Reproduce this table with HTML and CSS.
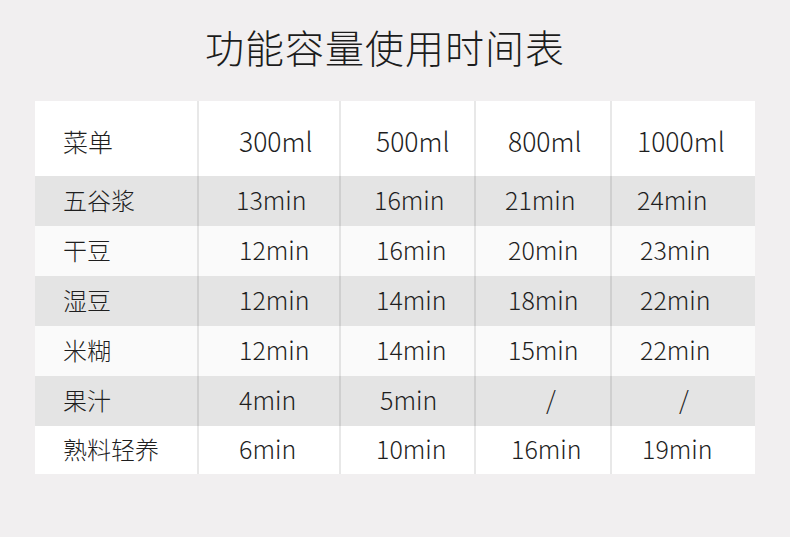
FILE: index.html
```html
<!DOCTYPE html>
<html lang="zh-CN">
<head>
<meta charset="utf-8">
<title>功能容量使用时间表</title>
<link rel="stylesheet" href="styles.css">
</head>
<body>
<main class="page">
  <h1 class="title">功能容量使用时间表</h1>
  <div class="table">
    <div class="row head">
      <div class="cell c1">菜单</div>
      <div class="cell c2">300ml</div>
      <div class="cell c3">500ml</div>
      <div class="cell c4">800ml</div>
      <div class="cell c5">1000ml</div>
    </div>
    <div class="row gray">
      <div class="cell c1">五谷浆</div>
      <div class="cell c2 l">13min</div>
      <div class="cell c3 l">16min</div>
      <div class="cell c4 l">21min</div>
      <div class="cell c5">24min</div>
    </div>
    <div class="row light">
      <div class="cell c1">干豆</div>
      <div class="cell c2">12min</div>
      <div class="cell c3">16min</div>
      <div class="cell c4">20min</div>
      <div class="cell c5 r">23min</div>
    </div>
    <div class="row gray">
      <div class="cell c1">湿豆</div>
      <div class="cell c2">12min</div>
      <div class="cell c3">14min</div>
      <div class="cell c4">18min</div>
      <div class="cell c5 r">22min</div>
    </div>
    <div class="row light">
      <div class="cell c1">米糊</div>
      <div class="cell c2">12min</div>
      <div class="cell c3">14min</div>
      <div class="cell c4">15min</div>
      <div class="cell c5 r">22min</div>
    </div>
    <div class="row gray">
      <div class="cell c1">果汁</div>
      <div class="cell c2">4min</div>
      <div class="cell c3 r">5min</div>
      <div class="cell c4 slash">/</div>
      <div class="cell c5 slash">/</div>
    </div>
    <div class="row white last">
      <div class="cell c1">熟料轻养</div>
      <div class="cell c2">6min</div>
      <div class="cell c3">10min</div>
      <div class="cell c4 r">16min</div>
      <div class="cell c5 rr">19min</div>
    </div>
  </div>
</main>
</body>
</html>
```

FILE: styles.css
```css
html, body {
  margin: 0;
  padding: 0;
}
body {
  background: #f1eff0;
  font-family: "Noto Sans CJK SC", "Noto Sans", sans-serif;
  font-weight: 300;
  color: #1e1e1e;
  width: 790px;
  height: 537px;
  overflow: hidden;
}
.page {
  display: flex;
  flex-direction: column;
  align-items: center;
}
.title {
  margin: 21px 20px 0 0;
  height: 80px;
  font-size: 39px;
  font-weight: 300;
  line-height: 50px;
  letter-spacing: 1px;
  color: #1c1c1c;
}
.table {
  width: 720px;
  display: flex;
  flex-direction: column;
}
.row {
  display: grid;
  grid-template-columns: 162px 142px 135px 136px 145px;
  height: 50px;
}
.row.head {
  height: 75px;
  background: #ffffff;
}
.row.gray { background: #e4e4e4; }
.row.light { background: #fafafa; }
.row.white { background: #ffffff; }
.row.last { height: 48px; }
.cell {
  display: flex;
  align-items: center;
  font-size: 25px;
  line-height: 1;
  white-space: nowrap;
  padding-bottom: 3px;
}
.cell.c1 {
  font-size: 24px;
}
.head .cell {
  font-size: 26.5px;
  padding-top: 5px;
  padding-bottom: 0;
}
.head .cell.c1 {
  font-size: 25px;
}
.cell + .cell {
  border-left: 2px solid rgba(0, 0, 0, 0.09);
}
.c1 { padding-left: 28px; }
.c2 { padding-left: 40px; }
.c3 { padding-left: 35px; }
.c4 { padding-left: 32px; }
.c5 { padding-left: 25px; }
.c2.l { padding-left: 37px; }
.c3.l { padding-left: 33px; }
.c4.l { padding-left: 29px; }
.c3.r { padding-left: 39px; }
.c4.r { padding-left: 35px; }
.c5.r { padding-left: 28px; }
.c5.rr { padding-left: 30px; }
.c4.slash { padding-left: 70px; }
.c5.slash { padding-left: 67px; }
```
